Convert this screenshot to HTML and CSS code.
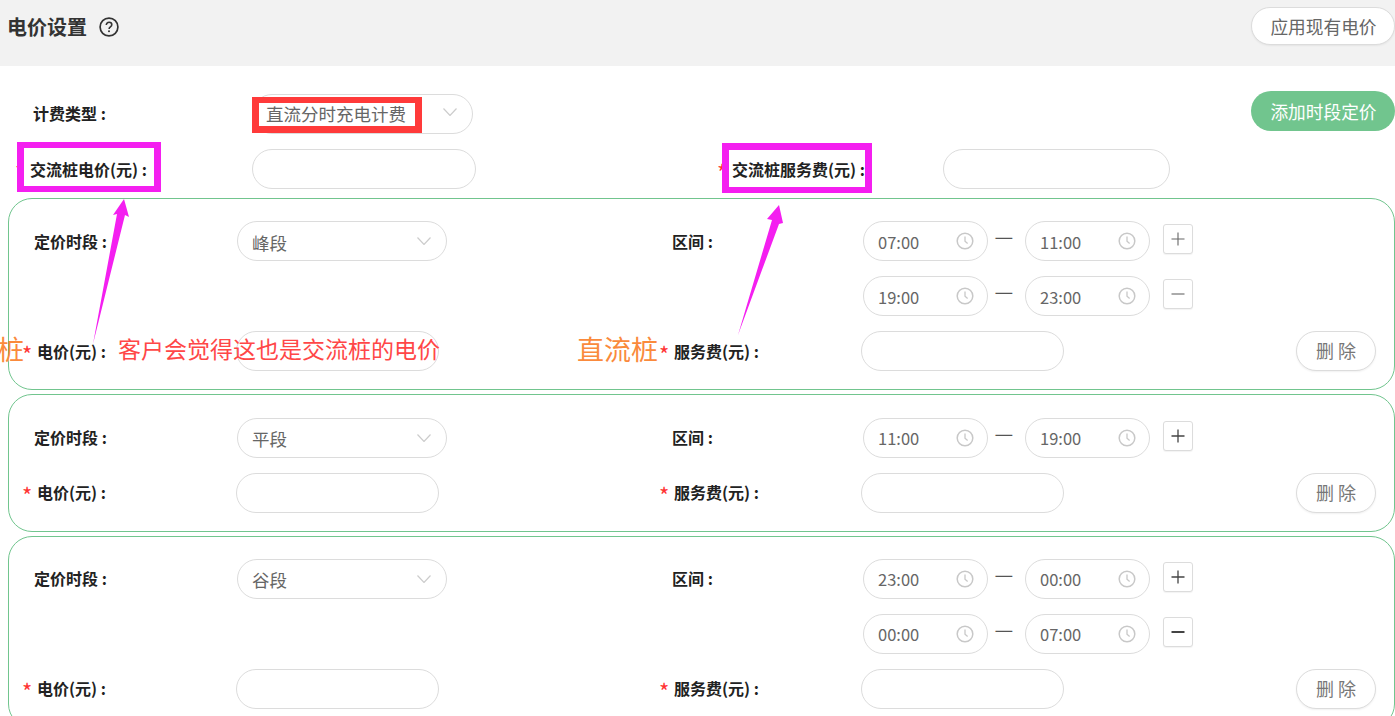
FILE: index.html
```html
<!DOCTYPE html>
<html lang="zh-CN">
<head>
<meta charset="utf-8">
<title>电价设置</title>
<link rel="stylesheet" href="styles.css">
</head>
<body>
<div class="page">
  <header class="head">
    <div class="title-group">
      <h1 class="title">电价设置</h1>
      <svg class="help" viewBox="0 0 20 20"><circle cx="10" cy="10" r="8.9" fill="none" stroke="#333" stroke-width="1.7"/><path d="M7.3 8c0-1.6 1.2-2.7 2.8-2.7 1.5 0 2.7 1 2.7 2.4 0 1.2-.7 1.7-1.5 2.3-.8.5-1.2 1-1.2 1.9" fill="none" stroke="#333" stroke-width="1.6"/><circle cx="10" cy="14.3" r="1" fill="#333"/></svg>
    </div>
    <button class="btn btn-apply">应用现有电价</button>
  </header>

  <section class="top">
    <div class="top-row">
      <div class="label label-type">计费类型 :</div>
      <div class="field select select-type"><span>直流分时充电计费</span><svg class="chev" viewBox="0 0 14 8"><path d="M.5.5 7 7.5 13.5.5" fill="none" stroke="#ccc" stroke-width="1.2"/></svg></div>
      <button class="btn btn-add">添加时段定价</button>
    </div>
    <div class="top-row top-row-2">
      <div class="label label-ac"><i class="star">*</i>交流桩电价(元) :</div>
      <div class="field input-ac"></div>
      <div class="label label-acs"><i class="star">*</i>交流桩服务费(元) :</div>
      <div class="field input-acs"></div>
    </div>
  </section>

  <section class="card card-first">
    <div class="range-row">
      <div class="label">定价时段 :</div>
      <div class="field select"><span>峰段</span><svg class="chev" viewBox="0 0 14 8"><path d="M.5.5 7 7.5 13.5.5" fill="none" stroke="#ccc" stroke-width="1.2"/></svg></div>
      <div class="label">区间 :</div>
      <div class="ranges">
        <div class="range">
          <div class="field time"><span>07:00</span><svg class="clock" viewBox="0 0 18 18"><circle cx="9" cy="9" r="7.8" fill="none" stroke="#c8c8c8" stroke-width="1.5"/><path d="M9 4.5V9.3l2.6 2.3" fill="none" stroke="#c8c8c8" stroke-width="1.3"/></svg></div>
          <span class="dash">—</span>
          <div class="field time"><span>11:00</span><svg class="clock" viewBox="0 0 18 18"><circle cx="9" cy="9" r="7.8" fill="none" stroke="#c8c8c8" stroke-width="1.5"/><path d="M9 4.5V9.3l2.6 2.3" fill="none" stroke="#c8c8c8" stroke-width="1.3"/></svg></div>
          <button class="square"><svg viewBox="0 0 16 16"><path d="M8 1.5v13M1.5 8h13" stroke="#666" stroke-width="1.1"/></svg></button>
        </div>
        <div class="range">
          <div class="field time"><span>19:00</span><svg class="clock" viewBox="0 0 18 18"><circle cx="9" cy="9" r="7.8" fill="none" stroke="#c8c8c8" stroke-width="1.5"/><path d="M9 4.5V9.3l2.6 2.3" fill="none" stroke="#c8c8c8" stroke-width="1.3"/></svg></div>
          <span class="dash">—</span>
          <div class="field time"><span>23:00</span><svg class="clock" viewBox="0 0 18 18"><circle cx="9" cy="9" r="7.8" fill="none" stroke="#c8c8c8" stroke-width="1.5"/><path d="M9 4.5V9.3l2.6 2.3" fill="none" stroke="#c8c8c8" stroke-width="1.3"/></svg></div>
          <button class="square"><svg viewBox="0 0 16 16"><path d="M1.5 8h13" stroke="#666" stroke-width="1.1"/></svg></button>
        </div>
      </div>
    </div>
    <div class="price-row">
      <div class="label label-price"><i class="star">*</i>电价(元) :</div>
      <div class="field input-price"></div>
      <div class="label label-price label-fee"><i class="star">*</i>服务费(元) :</div>
      <div class="field input-price"></div>
      <button class="btn btn-del">删 除</button>
    </div>
  </section>

  <section class="card card-middle">
    <div class="range-row">
      <div class="label">定价时段 :</div>
      <div class="field select"><span>平段</span><svg class="chev" viewBox="0 0 14 8"><path d="M.5.5 7 7.5 13.5.5" fill="none" stroke="#ccc" stroke-width="1.2"/></svg></div>
      <div class="label">区间 :</div>
      <div class="ranges">
        <div class="range">
          <div class="field time"><span>11:00</span><svg class="clock" viewBox="0 0 18 18"><circle cx="9" cy="9" r="7.8" fill="none" stroke="#c8c8c8" stroke-width="1.5"/><path d="M9 4.5V9.3l2.6 2.3" fill="none" stroke="#c8c8c8" stroke-width="1.3"/></svg></div>
          <span class="dash">—</span>
          <div class="field time"><span>19:00</span><svg class="clock" viewBox="0 0 18 18"><circle cx="9" cy="9" r="7.8" fill="none" stroke="#c8c8c8" stroke-width="1.5"/><path d="M9 4.5V9.3l2.6 2.3" fill="none" stroke="#c8c8c8" stroke-width="1.3"/></svg></div>
          <button class="square"><svg viewBox="0 0 16 16"><path d="M8 1.5v13M1.5 8h13" stroke="#444" stroke-width="1.3"/></svg></button>
        </div>
      </div>
    </div>
    <div class="price-row">
      <div class="label label-price"><i class="star">*</i>电价(元) :</div>
      <div class="field input-price"></div>
      <div class="label label-price label-fee"><i class="star">*</i>服务费(元) :</div>
      <div class="field input-price"></div>
      <button class="btn btn-del">删 除</button>
    </div>
  </section>

  <section class="card card-last">
    <div class="range-row">
      <div class="label">定价时段 :</div>
      <div class="field select"><span>谷段</span><svg class="chev" viewBox="0 0 14 8"><path d="M.5.5 7 7.5 13.5.5" fill="none" stroke="#ccc" stroke-width="1.2"/></svg></div>
      <div class="label">区间 :</div>
      <div class="ranges">
        <div class="range">
          <div class="field time"><span>23:00</span><svg class="clock" viewBox="0 0 18 18"><circle cx="9" cy="9" r="7.8" fill="none" stroke="#c8c8c8" stroke-width="1.5"/><path d="M9 4.5V9.3l2.6 2.3" fill="none" stroke="#c8c8c8" stroke-width="1.3"/></svg></div>
          <span class="dash">—</span>
          <div class="field time"><span>00:00</span><svg class="clock" viewBox="0 0 18 18"><circle cx="9" cy="9" r="7.8" fill="none" stroke="#c8c8c8" stroke-width="1.5"/><path d="M9 4.5V9.3l2.6 2.3" fill="none" stroke="#c8c8c8" stroke-width="1.3"/></svg></div>
          <button class="square"><svg viewBox="0 0 16 16"><path d="M8 1.5v13M1.5 8h13" stroke="#444" stroke-width="1.3"/></svg></button>
        </div>
        <div class="range">
          <div class="field time"><span>00:00</span><svg class="clock" viewBox="0 0 18 18"><circle cx="9" cy="9" r="7.8" fill="none" stroke="#c8c8c8" stroke-width="1.5"/><path d="M9 4.5V9.3l2.6 2.3" fill="none" stroke="#c8c8c8" stroke-width="1.3"/></svg></div>
          <span class="dash">—</span>
          <div class="field time"><span>07:00</span><svg class="clock" viewBox="0 0 18 18"><circle cx="9" cy="9" r="7.8" fill="none" stroke="#c8c8c8" stroke-width="1.5"/><path d="M9 4.5V9.3l2.6 2.3" fill="none" stroke="#c8c8c8" stroke-width="1.3"/></svg></div>
          <button class="square"><svg viewBox="0 0 16 16"><path d="M1.5 8h13" stroke="#444" stroke-width="2"/></svg></button>
        </div>
      </div>
    </div>
    <div class="price-row">
      <div class="label label-price"><i class="star">*</i>电价(元) :</div>
      <div class="field input-price"></div>
      <div class="label label-price label-fee"><i class="star">*</i>服务费(元) :</div>
      <div class="field input-price"></div>
      <button class="btn btn-del">删 除</button>
    </div>
  </section>

  <div class="marks">
    <div class="box-red"></div>
    <div class="box-pink box-pink-1"></div>
    <div class="box-pink box-pink-2"></div>
    <svg class="arrows" viewBox="0 0 1395 716">
      <path d="M93 344 117 214 113 215 124 199 129 217 125 215Z" fill="#f41ff0"/>
      <path d="M738 335 772 220 767 219 779 205 783 223 779 224Z" fill="#f41ff0"/>
    </svg>
    <span class="note-red">客户会觉得这也是交流桩的电价</span>
    <span class="note-orange note-orange-1">桩</span>
    <span class="note-orange note-orange-2">直流桩</span>
  </div>
</div>
</body>
</html>
```
FILE: styles.css
```css
* { box-sizing: border-box; }
html, body { margin: 0; padding: 0; background: #fff; }
body { overflow: hidden; font-family: "Noto Sans CJK SC", "Noto Sans", sans-serif; color: #555; }
.page { position: relative; width: 1395px; height: 716px; overflow: hidden; }

.head { height: 66px; background: #f2f2f2; display: flex; justify-content: space-between; align-items: flex-start; padding: 7px 0 0 7px; }
.title-group { display: flex; align-items: center; gap: 12px; height: 40px; }
.title { margin: 0; font-size: 20px; line-height: 26px; font-weight: 700; color: #333; }
.help { width: 20px; height: 20px; display: block; margin-top: -1px; }

.btn { font: inherit; font-size: 17.7px; line-height: 24px; border-radius: 20px; padding: 0; cursor: pointer; }
.btn-apply { width: 144px; height: 38px; padding-left: 1px; background: #fff; border: 1px solid #dcdcdc; color: #666; box-shadow: 0 1px 2px rgba(0,0,0,.06); }
.btn-add { width: 144px; height: 40px; padding-left: 1px; background: #71c58e; border: 0; color: #fff; margin-left: auto; margin-top: -3px; }
.btn-del { width: 80px; height: 40px; background: #fff; border: 1px solid #dcdcdc; color: #777; font-size: 18px; margin-left: auto; margin-right: 18px; padding-bottom: 2px; box-shadow: 0 1px 2px rgba(0,0,0,.06); }

.label { font-size: 16px; line-height: 40px; height: 40px; font-weight: 700; color: #222; white-space: nowrap; }
.star { font-style: normal; font-size: 22px; line-height: 0; vertical-align: -5px; color: #f33; display: inline-block; font-weight: 400; width: 15px; margin-left: -1px; }
.field { height: 40px; border: 1px solid #dcdcdc; border-radius: 20px; background: #fff; display: flex; align-items: center; justify-content: space-between; font-size: 17.5px; color: #666; }

.top { padding: 28px 0 0; display: flex; flex-direction: column; gap: 15px; height: 132px; }
.top-row { display: flex; height: 40px; align-items: flex-start; }
.label-type { width: 252px; padding-left: 33px; line-height: 38px; }
.select.select-type { width: 221px; padding: 0 15px 2px 13px; }
.label-ac { width: 252px; padding-left: 16px; }
.input-ac { width: 224px; }
.label-acs { width: 225px; margin-left: 242px; }
.input-acs { width: 227px; }

.card { margin-left: 8px; width: 1387px; border: 1px solid #71c58e; border-radius: 24px; display: flex; flex-direction: column; gap: 15px; margin-bottom: 4px; }
.card-first { padding: 22px 0 18px; }
.card-middle { padding: 23px 0 18px; }
.card-last { padding: 22px 0 18px; }
.range-row { display: grid; grid-template-columns: 228px 435px 191px 1fr; }
.range-row > .label:first-child { padding-left: 25px; }
.select { width: 210px; padding: 2px 15px 0 14px; }
.ranges { display: flex; flex-direction: column; gap: 15px; }
.range { display: flex; align-items: flex-start; height: 40px; }
.time { width: 125px; padding: 2px 13px 0 14px; font-size: 16.5px; }
.dash { width: 37px; padding-right: 5px; text-align: center; font-size: 21px; line-height: 29px; color: #555; }
.square { width: 30px; height: 30px; margin: 3px 0 0 13px; padding: 0; background: #fff; border: 1px solid #dcdcdc; border-radius: 3px; display: flex; align-items: center; justify-content: center; box-shadow: 0 1px 1px rgba(0,0,0,.05); }
.square svg { width: 16px; height: 16px; }
.chev { width: 14px; height: 8px; flex: none; margin-top: -2px; }
.clock { width: 18px; height: 18px; flex: none; margin-top: -2px; }

.card:not(.card-first) .label { line-height: 38px; }
.card:not(.card-first) .select { padding-top: 0; }
.card:not(.card-first) .time { padding-top: 0; }
.card:not(.card-first) .chev,
.card:not(.card-first) .clock { margin-top: 0; }

.price-row { display: flex; align-items: flex-start; height: 40px; }
.label-price { width: 227px; padding-left: 14px; }
.label-fee { width: 201px; padding-left: 0; margin-left: 221px; }
.input-price { width: 203px; }

.marks { position: absolute; inset: 0; pointer-events: none; }
.box-red { position: absolute; left: 252px; top: 97px; width: 170px; height: 36px; border: solid #ff3a3a; border-width: 6px 7px 7px; }
.box-pink { position: absolute; border: solid #f41ff0; border-width: 6px 7px; }
.box-pink-1 { left: 17px; top: 142px; width: 144px; height: 50px; }
.box-pink-2 { left: 722px; top: 143px; width: 150px; height: 50px; border-top-width: 7px; }
.arrows { position: absolute; inset: 0; width: 1395px; height: 716px; }
.note-red { position: absolute; left: 118px; top: 331px; font-size: 23px; line-height: 34px; color: #ff4747; white-space: nowrap; }
.note-orange { position: absolute; top: 330px; font-size: 27px; line-height: 38px; color: #fa8a3c; white-space: nowrap; }
.note-orange-1 { left: -3px; }
.note-orange-2 { left: 577px; }
```
